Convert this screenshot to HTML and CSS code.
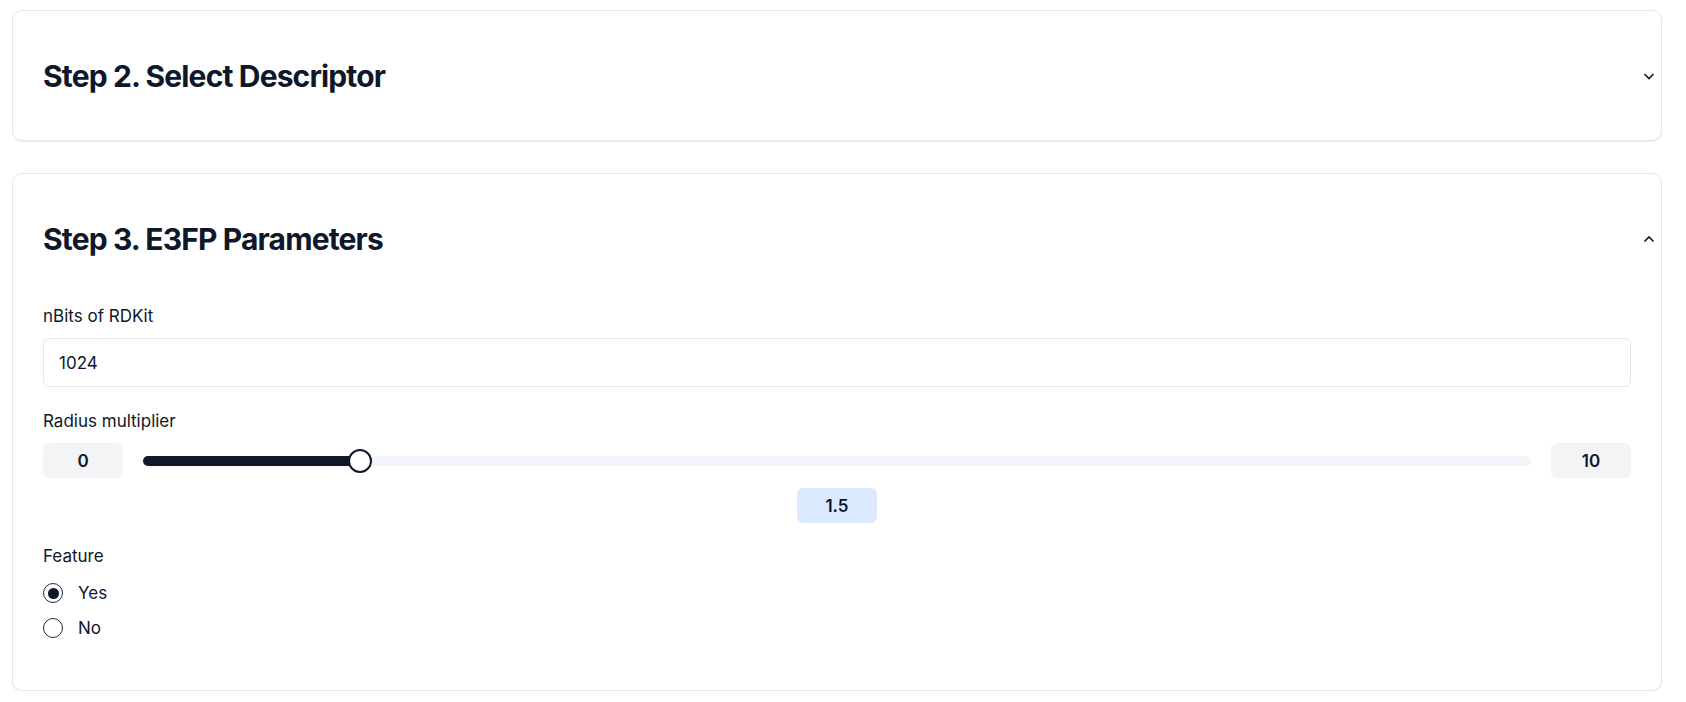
FILE: index.html
```html
<!DOCTYPE html>
<html lang="en">
<head>
    <meta charset="UTF-8">
    <meta name="viewport" content="width=device-width, initial-scale=1.0">
    <title>E3FP Settings</title>
    <link rel="stylesheet" href="styles.css">
</head>
<body>
    <div class="page">
        <div class="card">
            <div class="card-header">
                <h2>Step 2. Select Descriptor</h2>
                <svg class="chevron" width="12" height="8" viewBox="0 0 12 8"><path d="M1.5 2 L6 6.5 L10.5 2" fill="none" stroke="#0f172a" stroke-width="1.6"/></svg>
            </div>
        </div>

        <div class="card">
            <div class="card-header">
                <h2>Step 3. E3FP Parameters</h2>
                <svg class="chevron" width="12" height="8" viewBox="0 0 12 8"><path d="M1.5 6.5 L6 2 L10.5 6.5" fill="none" stroke="#0f172a" stroke-width="1.6"/></svg>
            </div>
            <div class="card-body">
                <label class="field-label">nBits of RDKit</label>
                <div class="text-input">1024</div>

                <label class="field-label spaced">Radius multiplier</label>
                <div class="slider-row">
                    <div class="range-box">0</div>
                    <div class="track">
                        <div class="track-fill" style="width: calc(12px + 0.15 * (100% - 24px))"></div>
                        <div class="thumb" style="left: calc(12px + 0.15 * (100% - 24px))"></div>
                    </div>
                    <div class="range-box">10</div>
                </div>
                <div class="value-row">
                    <div class="value-box">1.5</div>
                </div>

                <label class="field-label feature">Feature</label>
                <div class="radio-list">
                    <div class="radio-item"><span class="radio checked"></span>Yes</div>
                    <div class="radio-item"><span class="radio"></span>No</div>
                </div>
            </div>
        </div>
    </div>
</body>
</html>
```

FILE: styles.css
```css
body {
    margin: 0;
    font-family: Inter, "Noto Sans", sans-serif;
    color: #0f172a;
    background: #ffffff;
}

.page {
    padding: 10px 24px 0 12px;
    display: flex;
    flex-direction: column;
    gap: 32px;
}

.card {
    border: 1px solid #e2e8f0;
    border-radius: 10px;
    background: #ffffff;
    box-shadow: 0 1px 1px rgba(15, 23, 42, 0.08);
}

.card-header {
    height: 129px;
    display: flex;
    align-items: center;
    justify-content: space-between;
    padding: 0 6px 0 30px;
}

.card-header h2 {
    margin: 0;
    font-size: 30px;
    font-weight: 700;
    line-height: 36px;
    letter-spacing: -0.85px;
}

.chevron {
    display: block;
}

.card-body {
    padding: 1px 30px 50px;
    display: flex;
    flex-direction: column;
}

.field-label {
    font-size: 17px;
    line-height: 24px;
    margin-bottom: 10px;
}

.field-label.spaced {
    margin-top: 22px;
}

.field-label.feature {
    margin-top: 21px;
    margin-bottom: 13px;
}

.text-input {
    height: 49px;
    box-sizing: border-box;
    border: 1px solid #e2e8f0;
    border-radius: 6px;
    padding: 0 15px;
    display: flex;
    align-items: center;
    font-size: 17px;
}

.slider-row {
    display: flex;
    align-items: center;
    gap: 20px;
}

.range-box,
.value-box {
    width: 80px;
    height: 35px;
    border-radius: 6px;
    display: flex;
    align-items: center;
    justify-content: center;
    font-size: 17px;
    font-weight: 600;
}

.range-box {
    background: #f3f4f6;
    flex: none;
}

.track {
    flex: 1;
    position: relative;
    height: 10px;
    border-radius: 5px;
    background: #f1f5f9;
}

.track-fill {
    height: 100%;
    border-radius: 5px;
    background: #111827;
}

.thumb {
    position: absolute;
    top: 50%;
    width: 24px;
    height: 24px;
    box-sizing: border-box;
    border: 2px solid #111827;
    border-radius: 50%;
    background: #ffffff;
    transform: translate(-50%, -50%);
}

.value-row {
    display: flex;
    justify-content: center;
    margin-top: 10px;
}

.value-box {
    background: #dbeafe;
}

.radio-list {
    display: flex;
    flex-direction: column;
    gap: 11px;
}

.radio-item {
    display: flex;
    align-items: center;
    gap: 15px;
    font-size: 17px;
    line-height: 24px;
}

.radio {
    width: 20px;
    height: 20px;
    box-sizing: border-box;
    border: 1.5px solid #1e293b;
    border-radius: 50%;
    display: flex;
    align-items: center;
    justify-content: center;
}

.radio.checked::after {
    content: "";
    width: 11px;
    height: 11px;
    border-radius: 50%;
    background: #111827;
}
```
